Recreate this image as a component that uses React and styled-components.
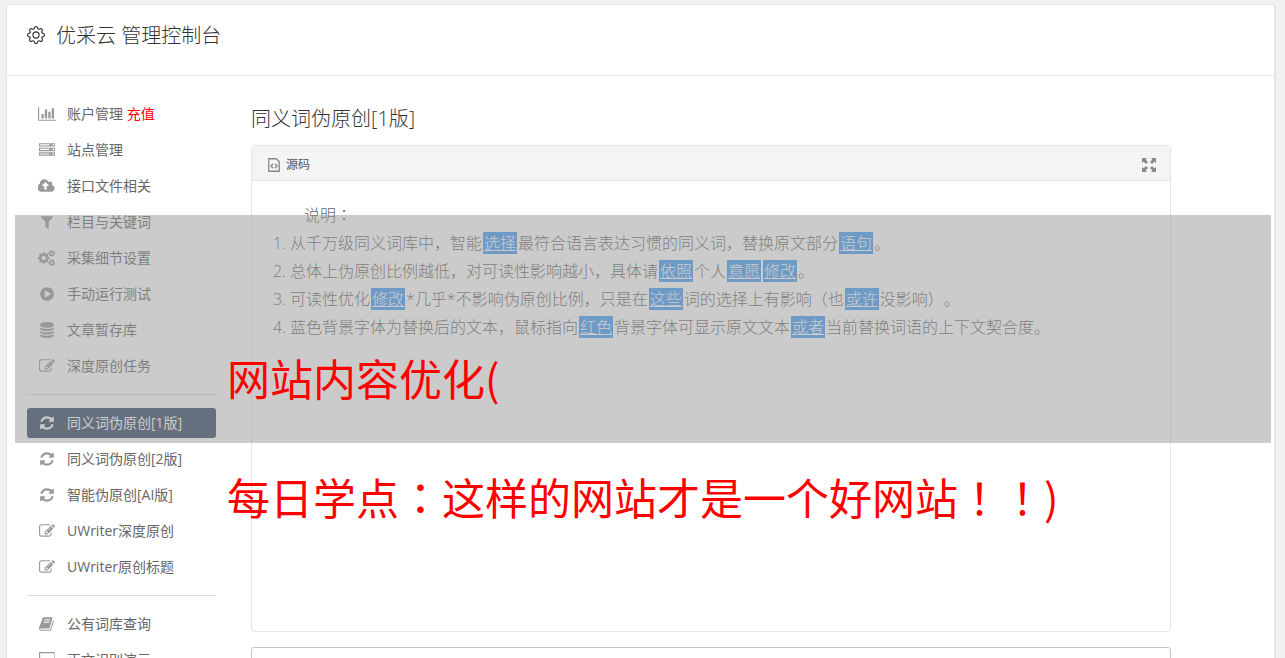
import React from "react";
import styled, { createGlobalStyle } from "styled-components";
import { BsGear } from "react-icons/bs";

const glyphs = {
  chart: {
    width: 2048,
    d: "M640 896v512h-256v-512h256zm384-512v1024h-256v-1024h256zm1024 1152v128h-2048v-1536h128v1408h1920zm-640-896v768h-256v-768h256zm384-384v1152h-256v-1152h256z",
  },
  server: {
    width: 1792,
    d: "M128 1408h1024v-128h-1024v128zm0-512h1024v-128h-1024v128zm1568 448q0-40-28-68t-68-28-68 28-28 68 28 68 68 28 68-28 28-68zm-1568-960h1024v-128h-1024v128zm1568 448q0-40-28-68t-68-28-68 28-28 68 28 68 68 28 68-28 28-68zm0-512q0-40-28-68t-68-28-68 28-28 68 28 68 68 28 68-28 28-68zm96 832v384h-1792v-384h1792zm0-512v384h-1792v-384h1792zm0-512v384h-1792v-384h1792z",
  },
  upload: {
    width: 1920,
    d: "M1216 864q0-14-9-23l-352-352q-9-9-23-9t-23 9l-351 351q-10 12-10 24 0 14 9 23t23 9h224v352q0 13 9.500 22.500t22.500 9.500h192q13 0 22.500-9.500t9.500-22.500v-352h224q13 0 22.500-9.500t9.500-22.500zm640 288q0 159-112.500 271.500t-271.500 112.500h-1088q-185 0-316.500-131.500t-131.500-316.500q0-130 70-240t188-165q-2-30-2-43 0-212 150-362t362-150q156 0 285.500 87t188.500 231q71-62 166-62 106 0 181 75t75 181q0 76-41 138 130 31 213.500 135.500t83.500 238.500z",
  },
  filter: {
    width: 1792,
    d: "M1595 295q17 41-14 70l-493 493v742q0 42-39 59-13 5-25 5-27 0-45-19l-256-256q-19-19-19-45v-486l-493-493q-31-29-14-70 17-39 59-39h1280q42 0 59 39z",
  },
  cogs: {
    width: 1920,
    d: "M896 896q0-106-75-181t-181-75-181 75-75 181 75 181 181 75 181-75 75-181zm768 512q0-52-38-90t-90-38-90 38-38 90q0 53 37.500 90.500t90.500 37.500 90.500-37.500 37.500-90.500zm0-1024q0-52-38-90t-90-38-90 38-38 90q0 53 37.500 90.500t90.500 37.500 90.500-37.500 37.500-90.500zm-384 421v185q0 10-7 19.500t-16 10.500l-155 24q-11 35-32 76 34 48 90 115 7 11 7 20 0 12-7 19-23 30-82.500 89.500t-78.500 59.500q-11 0-21-7l-115-90q-37 19-77 31-11 108-23 155-7 24-30 24h-186q-11 0-20-7.500t-10-17.500l-23-153q-34-10-75-31l-118 89q-7 7-20 7-11 0-21-8-144-133-144-160 0-9 7-19 10-14 41-53t47-61q-23-44-35-82l-152-24q-10-1-17-9.500t-7-19.500v-185q0-10 7-19.500t16-10.500l155-24q11-35 32-76-34-48-90-115-7-11-7-20 0-12 7-20 22-30 82-89t79-59q11 0 21 7l115 90q34-18 77-32 11-108 23-154 7-24 30-24h186q11 0 20 7.500t10 17.500l23 153q34 10 75 31l118-89q8-7 20-7 11 0 21 8 144 133 144 160 0 8-7 19-12 16-42 54t-45 60q23 48 34 82l152 23q10 2 17 10.500t7 19.500zm640 533v140q0 16-149 31-12 27-30 52 51 113 51 138 0 4-4 7-122 71-124 71-8 0-46-47t-52-68q-20 2-30 2t-30-2q-14 21-52 68t-46 47q-2 0-124-71-4-3-4-7 0-25 51-138-18-25-30-52-149-15-149-31v-140q0-16 149-31 13-29 30-52-51-113-51-138 0-4 4-7 4-2 35-20t59-34 30-16q8 0 46 46.500t52 67.500q20-2 30-2t30 2q51-71 92-112l6-2q4 0 124 70 4 3 4 7 0 25-51 138 17 23 30 52 149 15 149 31zm0-1024v140q0 16-149 31-12 27-30 52 51 113 51 138 0 4-4 7-122 71-124 71-8 0-46-47t-52-68q-20 2-30 2t-30-2q-14 21-52 68t-46 47q-2 0-124-71-4-3-4-7 0-25 51-138-18-25-30-52-149-15-149-31v-140q0-16 149-31 13-29 30-52-51-113-51-138 0-4 4-7 4-2 35-20t59-34 30-16q8 0 46 46.500t52 67.500q20-2 30-2t30 2q51-71 92-112l6-2q4 0 124 70 4 3 4 7 0 25-51 138 17 23 30 52 149 15 149 31z",
  },
  play: {
    width: 1792,
    d: "M896 128q209 0 385.500 103t279.500 279.500 103 385.500-103 385.500-279.500 279.500-385.500 103-385.500-103-279.500-279.500-103-385.500 103-385.500 279.500-279.500 385.500-103zm384 823q32-18 32-55t-32-55l-544-320q-31-19-64-1-32 19-32 56v640q0 37 32 56 16 8 32 8 17 0 32-9z",
  },
  database: {
    width: 1792,
    d: "M896 768q237 0 443-43t325-127v170q0 69-103 128t-280 93.500-385 34.500-385-34.500-280-93.500-103-128v-170q119 84 325 127t443 43zm0 768q237 0 443-43t325-127v170q0 69-103 128t-280 93.500-385 34.500-385-34.500-280-93.500-103-128v-170q119 84 325 127t443 43zm0-384q237 0 443-43t325-127v170q0 69-103 128t-280 93.500-385 34.500-385-34.500-280-93.500-103-128v-170q119 84 325 127t443 43zm0-1152q208 0 385 34.500t280 93.500 103 128v128q0 69-103 128t-280 93.500-385 34.500-385-34.500-280-93.500-103-128v-128q0-69 103-128t280-93.500 385-34.500z",
  },
  edit: {
    width: 1792,
    d: "M888 1184l116-116-152-152-116 116v56h96v96h56zm440-720q-16-16-33 1l-350 350q-17 17-1 33t33-1l350-350q17-17 1-33zm80 594v190q0 119-84.500 203.500t-203.500 84.500h-832q-119 0-203.500-84.500t-84.500-203.500v-832q0-119 84.500-203.500t203.500-84.500h832q63 0 117 25 15 7 18 23 3 17-9 29l-49 49q-14 14-32 8-23-6-45-6h-832q-66 0-113 47t-47 113v832q0 66 47 113t113 47h832q66 0 113-47t47-113v-126q0-13 9-22l64-64q15-15 35-7t20 29zm-96-738l288 288-672 672h-288v-288zm444 132l-92 92-288-288 92-92q28-28 68-28t68 28l152 152q28 28 28 68t-28 68z",
  },
  refresh: {
    width: 1792,
    d: "M1639 1056q0 5-1 7-64 268-268 434.500t-478 166.500q-146 0-282.500-55t-243.500-157l-129 129q-19 19-45 19t-45-19-19-45v-448q0-26 19-45t45-19h448q26 0 45 19t19 45-19 45l-137 137q71 66 161 102t187 36q134 0 250-65t186-179q11-17 53-117 8-23 30-23h192q13 0 22.500 9.500t9.500 22.500zm25-800v448q0 26-19 45t-45 19h-448q-26 0-45-19t-19-45 19-45l138-138q-148-137-349-137-134 0-250 65t-186 179q-11 17-53 117-8 23-30 23h-199q-13 0-22.500-9.500t-9.500-22.500v-7q65-268 270-434.500t480-166.500q146 0 284 55.500t245 156.500l130-129q19-19 45-19t45 19 19 45z",
  },
  book: {
    width: 1792,
    d: "M1639 478q40 57 18 129l-275 906q-19 64-76.500 107.500t-122.500 43.500h-923q-77 0-148.500-53.500t-99.500-131.500q-24-67-2-127 0-4 3-27t4-37q1-8-3-21.500t-3-19.500q2-11 8-21t16.500-23.500 16.500-23.500q23-38 45-91.500t30-91.500q3-10 .5-30t-.5-28q3-11 17-28t17-23q21-36 42-92t25-90q1-9-2.500-32t.5-28q4-13 22-30.500t22-22.500q19-26 42.500-84.500t27.500-96.500q1-8-3-25.500t-2-26.500q2-8 9-18t18-23 17-21q8-12 16.500-30.500t15-35 16-36 19.500-32 26.500-23.500 36-11.500 47.500 5.500l-1 3q38-9 51-9h761q74 0 114 56t18 130l-274 906q-36 119-71.500 153.500t-128.500 34.500h-869q-27 0-38 15-11 16-1 43 24 70 144 70h923q29 0 56-15.500t35-41.500l300-987q7-22 5-57 38 15 59 43zm-1064 2q-4 13 2 22.500t20 9.500h608q13 0 25.500-9.500t16.500-22.500l21-64q4-13-2-22.500t-20-9.500h-608q-13 0-25.500 9.500t-16.500 22.500zm-83 256q-4 13 2 22.500t20 9.500h608q13 0 25.500-9.500t16.500-22.500l21-64q4-13-2-22.500t-20-9.500h-608q-13 0-25.500 9.500t-16.500 22.500z",
  },
  desktop: {
    width: 1856,
    d: "M1728 992v-832q0-13-9.500-22.500t-22.500-9.500h-1536q-13 0-22.500 9.500t-9.500 22.500v832q0 13 9.500 22.500t22.500 9.500h1536q13 0 22.500-9.500t9.500-22.500zm128-832v1088q0 66-47 113t-113 47h-544q0 37 16 77.500t32 71 16 43.500q0 26-19 45t-45 19h-512q-26 0-45-19t-19-45q0-14 16-44t32-70 16-78h-544q-66 0-113-47t-47-113v-1088q0-66 47-113t113-47h1536q66 0 113 47t47 113z",
  },
};

const menu = [
  [
    { icon: "chart", label: "账户管理", extra: "充值" },
    { icon: "server", label: "站点管理" },
    { icon: "upload", label: "接口文件相关" },
    { icon: "filter", label: "栏目与关键词" },
    { icon: "cogs", label: "采集细节设置" },
    { icon: "play", label: "手动运行测试" },
    { icon: "database", label: "文章暂存库" },
    { icon: "edit", label: "深度原创任务" },
  ],
  [
    { icon: "refresh", label: "同义词伪原创[1版]", active: true },
    { icon: "refresh", label: "同义词伪原创[2版]" },
    { icon: "refresh", label: "智能伪原创[AI版]" },
    { icon: "edit", label: "UWriter深度原创" },
    { icon: "edit", label: "UWriter原创标题" },
  ],
  [
    { icon: "book", label: "公有词库查询" },
    { icon: "desktop", label: "正文识别演示" },
  ],
];

function Glyph({ name }) {
  const { width, d } = glyphs[name];
  return (
    <GlyphBox>
      <svg
        width={(width * 16) / 1792}
        height="16"
        viewBox={`0 0 ${width} 1792`}
        fill="currentColor"
        aria-hidden="true"
      >
        <path d={d} />
      </svg>
    </GlyphBox>
  );
}

export default function App() {
  return (
    <Page>
      <GlobalStyle />
      <Card>
        <Header>
          <BsGear size={18} />
          <Title>优采云 管理控制台</Title>
        </Header>
        <Content>
          <Sidebar>
            {menu.map((group, i) => (
              <Group key={i}>
                {group.map((item) => (
                  <li key={item.label}>
                    <Item href="#" $active={item.active}>
                      <Glyph name={item.icon} />
                      <Label>
                        {item.label} {item.extra && <Red>{item.extra}</Red>}
                      </Label>
                    </Item>
                  </li>
                ))}
              </Group>
            ))}
          </Sidebar>
          <Main>
            <Heading>同义词伪原创[1版]</Heading>
            <Editor>
              <Toolbar>
                <ToolButton type="button">
                  <svg width="12" height="14" viewBox="0 0 12 14" fill="none" stroke="#888" aria-hidden="true">
                    <path d="M.75.75h7.500l3 3v9.500H.75z" strokeWidth="1.300" />
                    <path d="M5 5.800 3 8l2 2.200M7 5.800 9 8l-2 2.200" strokeWidth="1.300" />
                  </svg>
                  源码
                </ToolButton>
                <ToolButton type="button" aria-label="全屏">
                  <svg width="14" height="14" viewBox="0 0 14 14" fill="#888" aria-hidden="true">
                    <path d="M0 0h5L3.500 1.500 6 4 4 6 1.500 3.500 0 5zM14 0v5l-1.500-1.500L10 6 8 4l2.500-2.500L9 0zM0 14V9l1.500 1.500L4 8l2 2-2.500 2.500L5 14zM14 14H9l1.500-1.500L8 10l2-2 2.500 2.500L14 9z" />
                  </svg>
                </ToolButton>
              </Toolbar>
              <Article>
                <Lead>
                  说明<Wide>：</Wide>
                </Lead>
                <List>
                  <li>
                    从千万级同义词库中，智能<Word>选择</Word>最符合语言表达习惯的同义词，替换原文部分
                    <Word>语句</Word>。
                  </li>
                  <li>
                    总体上伪原创比例越低，对可读性影响越小，具体请<Word>依照</Word>个人
                    <Word>意愿</Word>
                    <Word>修改</Word>。
                  </li>
                  <li>
                    可读性优化<Word>修改</Word>*几乎*不影响伪原创比例，只是在<Word>这些</Word>
                    词的选择上有影响（也<Word>或许</Word>没影响）。
                  </li>
                  <li>
                    蓝色背景字体为替换后的文本，鼠标指向<Word>红色</Word>背景字体可显示原文文本
                    <Word>或者</Word>当前替换词语的上下文契合度。
                  </li>
                </List>
              </Article>
            </Editor>
            <Source aria-label="原文" />
          </Main>
        </Content>
      </Card>
      <Band />
      <Caption>
        <div>网站内容优化(</div>
        <div>
          每日学点<Wide>：</Wide>这样的网站才是一个好网站<Wide>！！</Wide>)
        </div>
      </Caption>
    </Page>
  );
}

const GlobalStyle = createGlobalStyle`
  body {
    margin: 0;
    background: #f1f1f1;
    color: #666;
    font-family: "Open Sans", "Noto Sans CJK SC", sans-serif;
    font-size: 14px;
    text-spacing-trim: space-all;
  }

  * {
    box-sizing: border-box;
  }
`;

const Page = styled.div`
  position: relative;
  height: 100vh;
  overflow: hidden;
  padding: 4px 9px 0 6px;
`;

const Card = styled.div`
  min-height: 100vh;
  background: #fff;
  border: 1px solid #e5e5e5;
  border-right-width: 2px;
  border-radius: 4px;
`;

const Header = styled.header`
  display: flex;
  align-items: center;
  gap: 11px;
  height: 71px;
  padding: 0 20px 10px;
  border-bottom: 1px solid #e5e5e5;
  color: #333;
`;

const Title = styled.h1`
  margin: 0;
  padding-top: 2px;
  font-size: 20px;
  line-height: 28px;
  font-weight: 300;
`;

const Content = styled.div`
  display: flex;
  gap: 35px;
  padding: 23px 20px 0;
`;

const Sidebar = styled.nav`
  flex: 0 0 189px;
`;

const Group = styled.ul`
  display: flex;
  flex-direction: column;
  gap: 6px;
  margin: 0;
  padding: 0;
  list-style: none;

  & + & {
    margin-top: 13px;
    padding-top: 13px;
    border-top: 1px solid #dcdcdc;
  }
`;

const Item = styled.a`
  display: flex;
  align-items: center;
  gap: 10px;
  height: 30px;
  padding: 0 10px;
  border-radius: 3px;
  color: ${(props) => (props.$active ? "#fff" : "#666")};
  background: ${(props) => (props.$active ? "#354765" : "none")};
  text-decoration: none;
  white-space: nowrap;

  svg {
    color: ${(props) => (props.$active ? "#fff" : "#999")};
  }
`;

const GlyphBox = styled.span`
  display: flex;
  justify-content: center;
  flex: 0 0 20px;
`;

const Label = styled.span`
  padding-bottom: 2px;
`;

const Red = styled.span`
  color: #f00;
`;

const Main = styled.main`
  flex: 1;
  min-width: 0;
  max-width: 920px;
`;

const Heading = styled.h2`
  margin: 5px 0 12px;
  color: #333;
  font-size: 20px;
  line-height: 29px;
  font-weight: 300;
`;

const Editor = styled.section`
  border: 1px solid #e5e5e5;
  border-radius: 4px;
`;

const Toolbar = styled.div`
  display: flex;
  align-items: center;
  justify-content: space-between;
  height: 35px;
  padding: 3px 14px 0 16px;
  border-bottom: 1px solid #e5e5e5;
  background: #f4f4f4;
`;

const ToolButton = styled.button`
  display: flex;
  align-items: center;
  gap: 6px;
  padding: 0;
  border: 0;
  background: none;
  color: #555;
  font: inherit;
  font-size: 12px;
  line-height: 16px;
`;

const Article = styled.div`
  min-height: 450px;
  padding: 19px 20px;
  font-size: 16px;
  font-weight: 300;
  line-height: 28px;
`;

const Lead = styled.p`
  margin: 0;
  text-indent: 2em;
`;

const List = styled.ol`
  margin: 0;
  padding-left: 18px;
`;

const Word = styled.u`
  margin: 0 1px;
  padding: 0 1px;
  color: #fff;
  background: #459df5;
`;

const Wide = styled.span`
  font-family: "Noto Sans CJK TC", sans-serif;
`;

const Source = styled.textarea`
  display: block;
  width: 100%;
  height: 200px;
  margin-top: 15px;
  border: 1px solid #c4c4c4;
  border-radius: 3px;
  resize: none;
`;

const Band = styled.div`
  position: absolute;
  top: 215px;
  left: 15px;
  right: 14px;
  height: 228px;
  background: rgba(151, 151, 151, 0.5);
`;

const Caption = styled.div`
  position: absolute;
  top: 318px;
  left: 227px;
  color: #f00;
  font-family: "Noto Sans CJK SC", sans-serif;
  font-size: 43px;
  font-weight: 400;
  line-height: 119px;
  white-space: nowrap;
`;
